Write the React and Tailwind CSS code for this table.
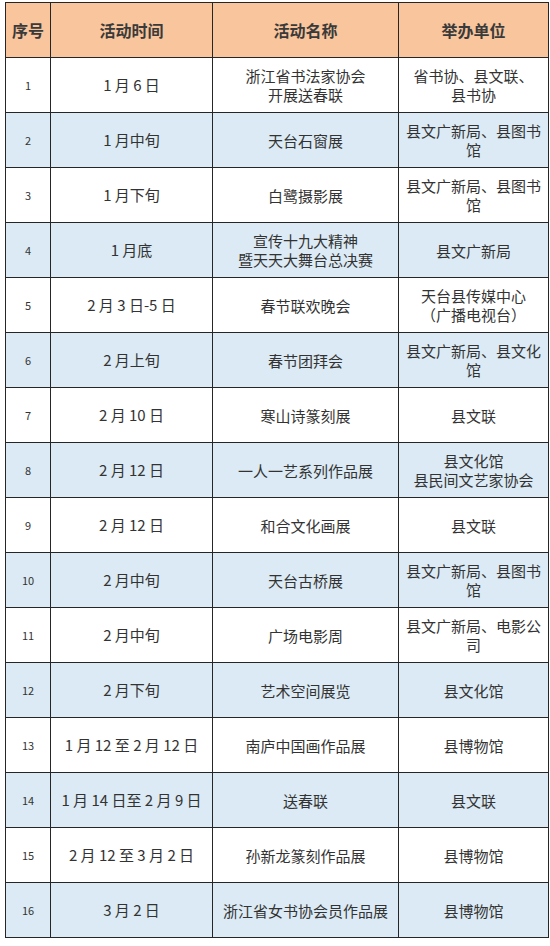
import React from "react";

const rows = [
  ["1", "1 月 6 日", ["浙江省书法家协会", "开展送春联"], ["省书协、县文联、", "县书协"]],
  ["2", "1 月中旬", ["天台石窗展"], ["县文广新局、县图书", "馆"]],
  ["3", "1 月下旬", ["白鹭摄影展"], ["县文广新局、县图书", "馆"]],
  ["4", "1 月底", ["宣传十九大精神", "暨天天大舞台总决赛"], ["县文广新局"]],
  ["5", "2 月 3 日-5 日", ["春节联欢晚会"], ["天台县传媒中心", "（广播电视台）"]],
  ["6", "2 月上旬", ["春节团拜会"], ["县文广新局、县文化", "馆"]],
  ["7", "2 月 10 日", ["寒山诗篆刻展"], ["县文联"]],
  ["8", "2 月 12 日", ["一人一艺系列作品展"], ["县文化馆", "县民间文艺家协会"]],
  ["9", "2 月 12 日", ["和合文化画展"], ["县文联"]],
  ["10", "2 月中旬", ["天台古桥展"], ["县文广新局、县图书", "馆"]],
  ["11", "2 月中旬", ["广场电影周"], ["县文广新局、电影公", "司"]],
  ["12", "2 月下旬", ["艺术空间展览"], ["县文化馆"]],
  ["13", "1 月 12 至 2 月 12 日", ["南庐中国画作品展"], ["县博物馆"]],
  ["14", "1 月 14 日至 2 月 9 日", ["送春联"], ["县文联"]],
  ["15", "2 月 12 至 3 月 2 日", ["孙新龙篆刻作品展"], ["县博物馆"]],
  ["16", "3 月 2 日", ["浙江省女书协会员作品展"], ["县博物馆"]],
];

const Lines = ({ items }) => (
  <div className="leading-[19px]">
    {items.map((t, i) => (
      <div key={i}>{t}</div>
    ))}
  </div>
);

const App = () => {
  const cell = "border border-[#262626] text-center align-middle px-1";

  return (
    <div
      className="bg-white w-[550px] h-[946px] pt-[2px] pl-[5px] text-[#333] text-[15px]"
      style={{ fontFamily: '"Noto Sans CJK SC", "Noto Sans", sans-serif' }}
    >
      <table className="border-collapse table-fixed w-[543px]">
        <colgroup>
          <col className="w-[45px]" />
          <col className="w-[162px]" />
          <col className="w-[186px]" />
          <col className="w-[150px]" />
        </colgroup>
        <thead>
          <tr className="h-[55px] bg-[#f9c59c] font-bold text-[16px] text-[#3a3a3a]">
            <th className={`${cell} px-0`}>序号</th>
            <th className={cell}>活动时间</th>
            <th className={cell}>活动名称</th>
            <th className={cell}>举办单位</th>
          </tr>
        </thead>
        <tbody>
          {rows.map(([no, date, name, org], i) => (
            <tr
              key={no}
              className={`h-[55px] ${i % 2 === 1 ? "bg-[#dbeaf4]" : "bg-white"}`}
            >
              <td className={`${cell} text-[11px]`}>{no}</td>
              <td className={`${cell} whitespace-nowrap`}>{date}</td>
              <td className={`${cell} whitespace-nowrap`}>
                <Lines items={name} />
              </td>
              <td className={`${cell} whitespace-nowrap`}>
                <Lines items={org} />
              </td>
            </tr>
          ))}
        </tbody>
      </table>
    </div>
  );
};

export default App;
